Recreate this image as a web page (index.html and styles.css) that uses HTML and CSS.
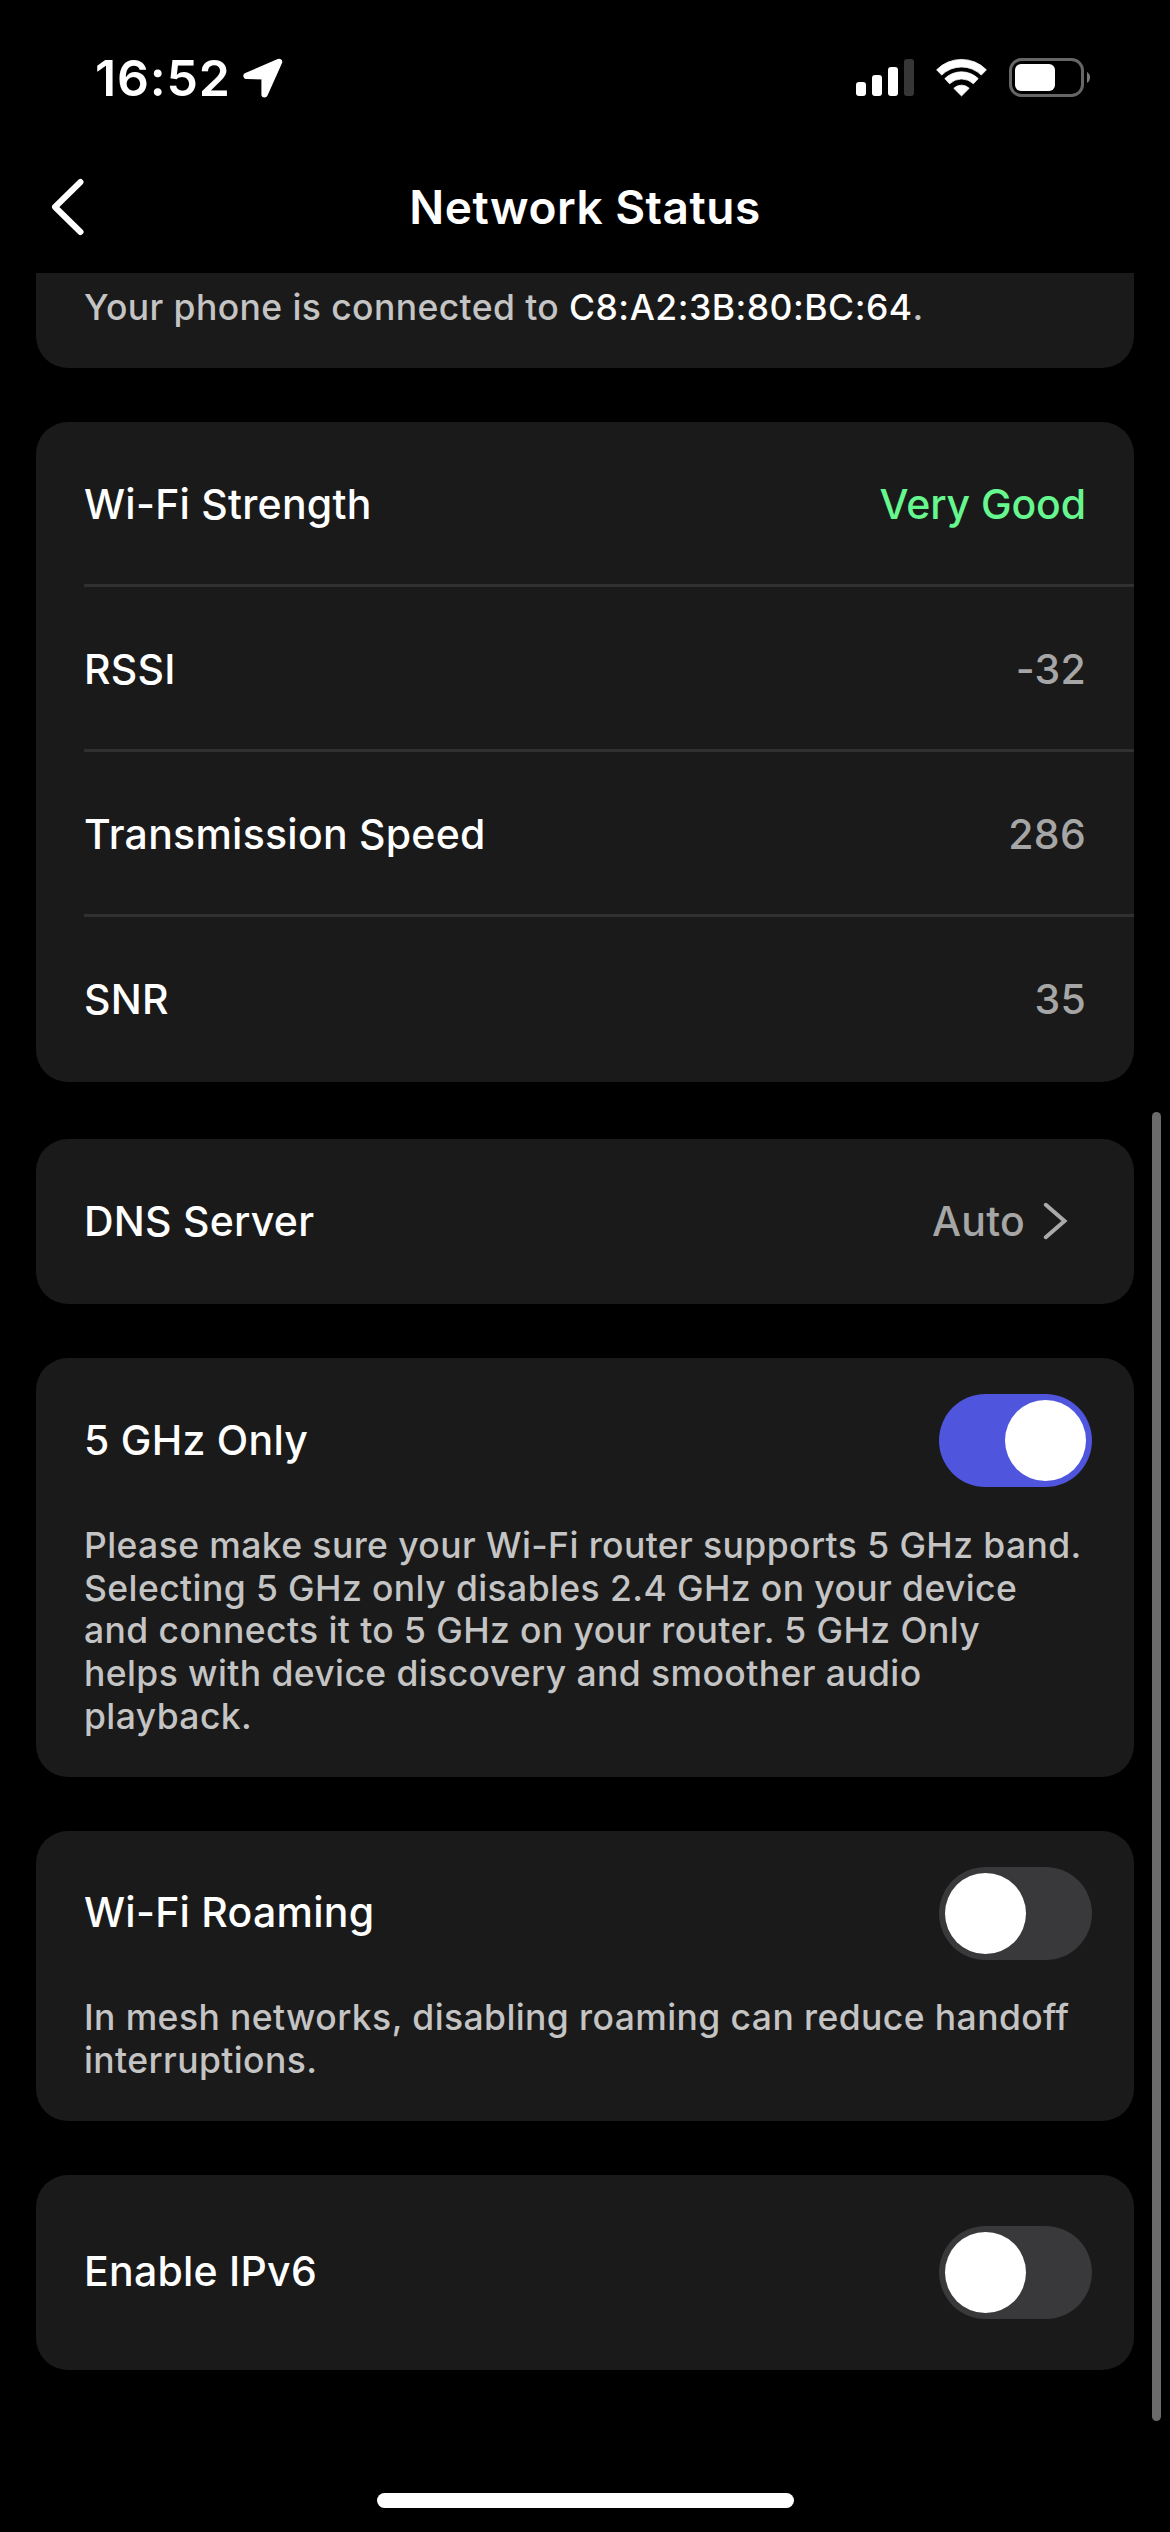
FILE: index.html
```html
<!DOCTYPE html>
<html lang="en">
<head>
  <meta charset="UTF-8">
  <meta name="viewport" content="width=device-width, initial-scale=1.0">
  <title>Network Status</title>
  <link rel="stylesheet" href="styles.css">
</head>
<body>
  <!-- Status bar -->
  <div class="status-bar">
    <div class="clock">
      <span class="time">16:52</span>
      <svg class="location" width="40" height="40" viewBox="0 0 40 40">
        <path d="M36 4 L3.6 17.9 L21.6 18.4 L21.6 36.2 Z" fill="#fff" stroke="#fff" stroke-width="6.4" stroke-linejoin="round"/>
      </svg>
    </div>
    <div class="indicators">
      <svg width="58" height="39" viewBox="0 0 58 39">
        <rect x="0" y="24" width="10" height="14" rx="3" fill="#fff"/>
        <rect x="16" y="17" width="10" height="21" rx="3" fill="#fff"/>
        <rect x="32" y="9" width="10" height="29" rx="3" fill="#fff"/>
        <rect x="48" y="1" width="10" height="37" rx="3" fill="#363636"/>
      </svg>
      <svg width="51" height="39" viewBox="0 -1 51 39" fill="#fff" stroke="#fff" stroke-width="0.8" stroke-linejoin="round">
        <path d="M0.6 10.8 A35 35 0 0 1 50.4 10.8 L45.3 16.1 A28.2 28.2 0 0 0 5.7 16.1 Z"/>
        <path d="M8.8 19.6 A24 24 0 0 1 42.2 19.6 L37.4 24.8 A17 17 0 0 0 13.6 24.8 Z"/>
        <path d="M17.8 29.3 A11 11 0 0 1 33.2 29.3 L25.5 36.9 Z"/>
      </svg>
      <svg width="82" height="39" viewBox="0 0 82 39">
        <rect x="1.5" y="1.5" width="72" height="36" rx="11" fill="none" stroke="#666" stroke-width="3"/>
        <rect x="6" y="6" width="40" height="27" rx="6" fill="#fff"/>
        <path d="M78 14 A6.5 6.5 0 0 1 78 25 Z" fill="#7a7a7a"/>
      </svg>
    </div>
  </div>

  <!-- Title bar -->
  <header class="title-bar">
    <a class="back" href="#" aria-label="Back">
      <svg width="34" height="58" viewBox="0 0 34 58">
        <path d="M30.5 4 L5 29 L30.5 54" fill="none" stroke="#fff" stroke-width="6" stroke-linecap="round" stroke-linejoin="round"/>
      </svg>
    </a>
    <h1>Network Status</h1>
  </header>

  <main>
    <section class="card connected">
      <p>Your phone is connected to <strong>C8:A2:3B:80:BC:64</strong>.</p>
    </section>

    <!-- Signal details -->
    <section class="card">
      <div class="row">
        <span>Wi-Fi Strength</span>
        <span class="value good">Very Good</span>
      </div>
      <div class="row">
        <span>RSSI</span>
        <span class="value">-32</span>
      </div>
      <div class="row">
        <span>Transmission Speed</span>
        <span class="value">286</span>
      </div>
      <div class="row">
        <span>SNR</span>
        <span class="value">35</span>
      </div>
    </section>

    <section class="card dns">
      <a class="row" href="#">
        <span>DNS Server</span>
        <span class="value link">Auto
          <svg width="25" height="38" viewBox="0 0 25 38">
            <path d="M2.8 2.8 L21.5 19 L2.8 35.2" fill="none" stroke="#aaa" stroke-width="4" stroke-linecap="round"/>
          </svg>
        </span>
      </a>
    </section>

    <!-- Switches -->
    <section class="card setting">
      <div class="option">
        <span>5 GHz Only</span>
        <span class="toggle on"></span>
      </div>
      <p>Please make sure your Wi-Fi router supports 5 GHz band. Selecting 5 GHz only disables 2.4 GHz on your device and connects it to 5 GHz on your router. 5 GHz Only<br> helps with device discovery and smoother audio<br> playback.</p>
    </section>

    <section class="card setting">
      <div class="option">
        <span>Wi-Fi Roaming</span>
        <span class="toggle"></span>
      </div>
      <p>In mesh networks, disabling roaming can reduce handoff interruptions.</p>
    </section>

    <section class="card ipv6">
      <div class="option">
        <span>Enable IPv6</span>
        <span class="toggle"></span>
      </div>
    </section>
  </main>

  <div class="scrollbar"></div>
  <div class="home-indicator"></div>
</body>
</html>
```
FILE: styles.css
```css
* {
  box-sizing: border-box;
}
body {
  position: relative;
  margin: 0;
  height: 2532px;
  overflow: hidden;
  background-color: #000;
  color: #fff;
  font-family: Inter, "Liberation Sans", sans-serif;
  font-size: 41px;
  font-weight: 500;
  letter-spacing: 0.25px;
}
svg {
  display: block;
}
a {
  color: inherit;
  text-decoration: none;
}
/* Status bar */
.status-bar {
  display: flex;
  justify-content: space-between;
  align-items: center;
  height: 155px;
  padding: 0 79px 0 95px;
}
.clock {
  display: flex;
  align-items: center;
  gap: 12px;
}
.time {
  font-size: 50px;
  font-weight: 600;
  letter-spacing: 0.8px;
}
.indicators {
  display: flex;
  gap: 22px;
}
/* Title bar */
.title-bar {
  display: grid;
  grid-template-columns: 100px 1fr 100px;
  align-items: center;
  height: 118px;
  padding: 0 50px;
}
.title-bar svg {
  margin-top: -15px;
}
h1 {
  margin: 0;
  padding-bottom: 14px;
  font-size: 46px;
  font-weight: 600;
  letter-spacing: 0.5px;
  text-align: center;
}
/* Cards */
main {
  display: flex;
  flex-direction: column;
  gap: 54px;
  padding: 0 36px;
}
.card {
  background-color: #1a1a1a;
  border-radius: 32px;
}
.card p {
  margin: 0;
  color: #c4c4c4;
  font-size: 35.5px;
  line-height: 42.75px;
  letter-spacing: 0.4px;
}
.connected {
  height: 95px;
  padding: 14px 48px 0;
  border-radius: 0 0 32px 32px;
}
.connected strong {
  color: #fff;
  font-weight: 500;
  letter-spacing: 0.5px;
}
.row {
  display: flex;
  justify-content: space-between;
  align-items: center;
  height: 165px;
  margin-left: 48px;
  padding: 2px 48px 0 0;
  border-bottom: 3px solid #303030;
}
.row:last-child {
  border-bottom-color: transparent;
}
.value {
  color: #a6a6a6;
}
.good {
  color: #66f78f;
  letter-spacing: -0.1px;
}
.link {
  display: flex;
  align-items: center;
  gap: 18px;
  padding-right: 18px;
}
.dns {
  margin-top: 3px;
}
/* Switches */
.setting {
  padding: 36px 42px 38px 48px;
}
.card.setting p {
  margin-top: 37.75px;
  padding-right: 5px;
}
.option {
  display: flex;
  justify-content: space-between;
  align-items: center;
}
.option span:first-child {
  padding-bottom: 2px;
}
.ipv6 {
  padding: 51px 42px 51px 48px;
}
.toggle {
  width: 153px;
  height: 93px;
  padding: 6px;
  border-radius: 47px;
  background-color: #39393b;
}
.toggle::before {
  content: "";
  display: block;
  width: 81px;
  height: 81px;
  border-radius: 50%;
  background-color: #fff;
}
.toggle.on {
  background-color: #4f55dc;
}
.toggle.on::before {
  margin-left: auto;
}
/* Overlays */
.scrollbar {
  position: absolute;
  top: 1112px;
  right: 9px;
  width: 9px;
  height: 1309px;
  border-radius: 5px;
  background-color: #6b6b6b;
}
.home-indicator {
  width: 417px;
  height: 15px;
  margin: 123px auto 0;
  border-radius: 8px;
  background-color: #fff;
}
```
